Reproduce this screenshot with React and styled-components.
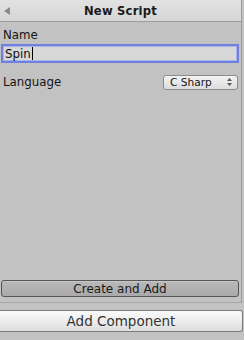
import React from 'react';
import styled, { createGlobalStyle } from 'styled-components';

const Global = createGlobalStyle`
	html, body {
		margin: 0;
		padding: 0;
		background: #c3c3c3;
		font-family: 'DejaVu Sans', 'Liberation Sans', sans-serif;
		color: #111;
	}
`;

const Pagina = styled.div`
	width: 244px;
	height: 340px;
	display: flex;
	flex-direction: column;
	overflow: hidden;
`;

const Panel = styled.div`
	width: 242px;
	height: 303px;
	display: flex;
	flex-direction: column;
	background: #c2c2c2;
	border-right: 1px solid #9b9b9b;
	border-bottom: 1px solid #a8a8a8;
	box-sizing: border-box;
`;

const Encabezado = styled.div`
	height: 22px;
	display: flex;
	align-items: center;
	justify-content: center;
	position: relative;
	background: linear-gradient(#e2e2e2, #d6d6d6);
	border-bottom: 1px solid #9c9c9c;
	box-sizing: border-box;

	h3 {
		margin: 0;
		font-size: 11.6px;
		font-weight: 700;
		color: #1a1a1a;
		letter-spacing: 0.2px;
	}
`;

const Flecha = styled.span`
	position: absolute;
	left: 4px;
	top: 7px;
	width: 0;
	height: 0;
	border-top: 4px solid transparent;
	border-bottom: 4px solid transparent;
	border-right: 6px solid #8a8a8a;
`;

const Cuerpo = styled.div`
	flex: 1;
	display: flex;
	flex-direction: column;
	padding: 6px 2px 5px 1px;
`;

const Etiqueta = styled.label`
	font-size: 11.8px;
	padding-left: 2px;
	line-height: 14px;
	color: #141414;
`;

const Campo = styled.div`
	margin-top: 2px;
	height: 19px;
	width: 238px;
	box-sizing: border-box;
	border: 2px solid #6f80de;
	box-shadow: inset 0 0 0 1px #a9b3e8;
	background: #d8d8d8;
	display: flex;
	align-items: center;
	padding-left: 2px;
	font-size: 11.8px;
	color: #101010;

	span {
		display: inline-block;
		width: 1px;
		height: 13px;
		background: #000;
		margin-left: 1px;
	}
`;

const Fila = styled.div`
	margin-top: 11px;
	display: flex;
	align-items: center;
	justify-content: space-between;
	height: 16px;
`;

const Selector = styled.div`
	width: 75px;
	height: 15px;
	box-sizing: border-box;
	margin-right: 1px;
	border: 1px solid #8c8c8c;
	border-radius: 3px;
	background: linear-gradient(#f3f3f3, #dcdcdc);
	display: flex;
	align-items: center;
	justify-content: space-between;
	padding: 0 5px 0 6px;
	font-size: 10.6px;
	color: #151515;

	svg {
		width: 5px;
		height: 8px;
	}
`;

const Boton = styled.button`
	margin-top: auto;
	width: 238px;
	height: 17px;
	box-sizing: border-box;
	border: 1px solid #555;
	border-radius: 3px;
	background: linear-gradient(#b9b9b9, #a9a9a9);
	box-shadow: inset 0 1px 0 #c8c8c8;
	font-family: 'DejaVu Sans', 'Liberation Sans', sans-serif;
	font-size: 12px;
	color: #1a1a1a;
	padding: 0;
	cursor: pointer;
`;

const BotonAgregar = styled.button`
	margin-top: 7px;
	width: 243px;
	height: 22px;
	box-sizing: border-box;
	border: 1px solid #7c7c7c;
	border-radius: 0 3px 3px 0;
	border-left: none;
	background: linear-gradient(#fbfbfb, #dedede);
	font-family: 'DejaVu Sans', 'Liberation Sans', sans-serif;
	font-size: 13.5px;
	color: #333;
	padding: 0;
	cursor: pointer;
`;

const App = () => {
	return (
		<>
			<Global />
			<Pagina>
				<Panel>
					<Encabezado>
						<Flecha />
						<h3>New Script</h3>
					</Encabezado>
					<Cuerpo>
						<Etiqueta>Name</Etiqueta>
						<Campo>
							Spin<span />
						</Campo>
						<Fila>
							<Etiqueta>Language</Etiqueta>
							<Selector>
								C Sharp
								<svg viewBox="0 0 5 8">
									<path d="M2.5 0 L5 3 H0 Z M2.5 8 L5 5 H0 Z" fill="#555" />
								</svg>
							</Selector>
						</Fila>
						<Boton>Create and Add</Boton>
					</Cuerpo>
				</Panel>
				<BotonAgregar>Add Component</BotonAgregar>
			</Pagina>
		</>
	);
};

export default App;
